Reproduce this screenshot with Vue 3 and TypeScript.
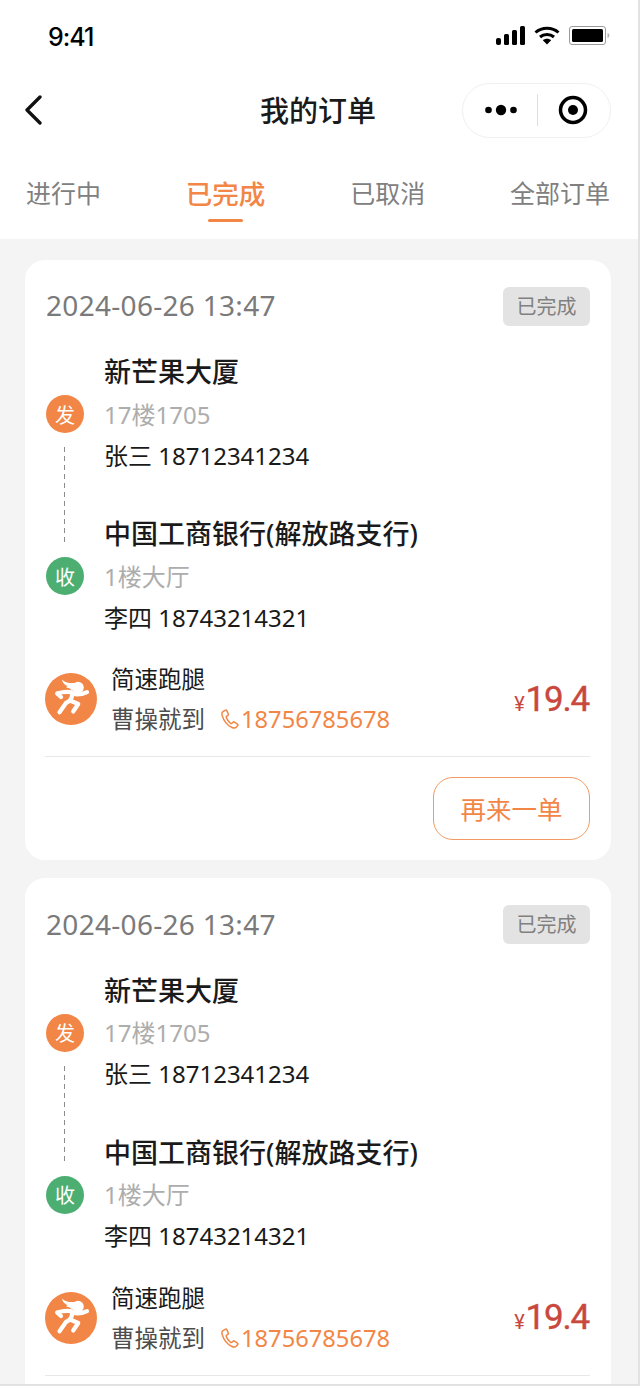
<script setup lang="ts">
const tabs = ['进行中', '已完成', '已取消', '全部订单']
const orders = [1, 2].map((id) => ({
  id,
  time: '2024-06-26 13:47',
  status: '已完成',
  stops: [
    { tag: '发', kind: 'send', name: '新芒果大厦', room: '17楼1705', contact: '张三 18712341234' },
    { tag: '收', kind: 'recv', name: '中国工商银行(解放路支行)', room: '1楼大厅', contact: '李四 18743214321' },
  ],
  service: '简速跑腿',
  rider: '曹操就到',
  phone: '18756785678',
  price: '19.4',
}))
</script>

<template>
  <div class="page">
    <div class="screen">
      <header class="top">
        <div class="status">
          <span class="clock">9:41</span>
          <div class="status-icons">
            <svg width="29" height="19" viewBox="0 0 29 19" fill="#000" aria-hidden="true">
              <rect x="0" y="12" width="5" height="7" rx="2" />
              <rect x="8" y="8" width="5" height="11" rx="1.500" />
              <rect x="16" y="4" width="5" height="15" rx="1.500" />
              <rect x="24" y="0" width="5" height="19" rx="1.500" />
            </svg>
            <svg width="26" height="19" viewBox="0 0 26 19" aria-hidden="true">
              <path d="M1.500 6.500C7.800.8 18.200.8 24.500 6.500" fill="none" stroke="#000" stroke-width="3" />
              <path d="M6 11c3.900-3.400 10.100-3.400 14 0" fill="none" stroke="#000" stroke-width="3" />
              <path d="M8.800 14.200c2.400-2 6-2 8.400 0L13 18.500z" fill="#000" />
            </svg>
            <svg width="41" height="19" viewBox="0 0 41 19" aria-hidden="true">
              <rect x="0.500" y="0.500" width="36" height="18" rx="2.500" fill="none" stroke="#9b9b9b" />
              <rect x="3" y="3" width="31" height="13" rx="1.500" fill="#000" />
              <path d="M38.500 7c1.200.3 1.800 1.200 1.800 2.500s-.6 2.200-1.800 2.500z" fill="#b5b5b5" />
            </svg>
          </div>
        </div>
        <div class="nav">
          <svg class="back" width="20" height="30" viewBox="0 0 20 30" aria-hidden="true">
            <path d="M16 2 3 15l13 13" fill="none" stroke="#111" stroke-width="3.300" stroke-linecap="round" stroke-linejoin="round" />
          </svg>
          <h1 class="title">我的订单</h1>
          <div class="capsule">
            <svg width="32" height="14" viewBox="0 0 32 14" fill="#000" aria-hidden="true">
              <circle cx="3.500" cy="7" r="3.300" />
              <circle cx="16" cy="7" r="5.200" />
              <circle cx="28.500" cy="7" r="3.300" />
            </svg>
            <span class="capsule-line"></span>
            <svg width="30" height="30" viewBox="0 0 30 30" aria-hidden="true">
              <circle cx="15" cy="15" r="12.500" fill="none" stroke="#000" stroke-width="3.500" />
              <circle cx="15" cy="15" r="5" fill="#000" />
            </svg>
          </div>
        </div>
        <nav class="tabs">
          <button v-for="(t, i) in tabs" :key="t" class="tab" :class="{ 'tab--on': i === 1 }">{{ t }}</button>
        </nav>
      </header>

      <main class="list">
        <article v-for="o in orders" :key="o.id" class="card">
          <div class="card-head">
            <span class="time">{{ o.time }}</span>
            <span class="badge">{{ o.status }}</span>
          </div>

          <div class="route">
            <div v-for="s in o.stops" :key="s.tag" class="stop" :class="'stop--' + s.kind">
              <span class="dot">{{ s.tag }}</span>
              <div class="stop-text">
                <div class="stop-name">{{ s.name }}</div>
                <div class="stop-room">{{ s.room }}</div>
                <div class="stop-contact">{{ s.contact }}</div>
              </div>
            </div>
          </div>

          <div class="rider">
            <span class="logo">
              <svg width="52" height="52" viewBox="0 0 52 52" aria-hidden="true">
                <circle cx="26" cy="26" r="26" fill="#f28646" />
                <circle cx="33" cy="14.500" r="5.800" fill="#fff" />
                <path d="M17 6.500c3 3 7 4 13 3.500l-1 7c-2 .3-4-.5-5-2-1 .3-2 0-3-1 .8 0 1.300-.3 1.500-.8C19.500 12 17.500 9.500 17 6.500z" fill="#fff" />
                <path d="M12.200 20.500c5-1.500 10-2 14.800-1.200 1.500 2.800 8 3 15-.2M12.200 20.500l3.800 3.500" fill="none" stroke="#fff" stroke-width="4.200" stroke-linecap="round" stroke-linejoin="round" />
                <path d="M27 20.500c.5 4-2 7.500-6 9.500l-6.500 9.200M25 27.500l8.200 3.500-5 7.500" fill="none" stroke="#fff" stroke-width="4.200" stroke-linecap="round" stroke-linejoin="round" />
              </svg>
            </span>
            <div class="rider-text">
              <div class="service">{{ o.service }}</div>
              <div class="rider-line">
                <span class="rider-name">{{ o.rider }}</span>
                <span class="phone">
                  <svg width="18" height="20" viewBox="0 0 18 20" aria-hidden="true">
                    <path d="M4.500 1.200 2 2.600C.8 3.400.7 5 1.200 6.600c1.400 4.700 5 9.700 9.800 11.900 1.800.8 3.400.6 4.500-.5l1.200-1.400c.4-.5.300-1.100-.2-1.400l-3.100-2.100c-.5-.3-1-.3-1.400.1l-1 1c-.4.400-.9.400-1.400.1-2-1.400-3.500-3.500-4.300-5.800-.2-.5 0-1 .4-1.300l1.200-.8c.5-.3.600-.9.400-1.400L5.800 1.600c-.3-.5-.8-.7-1.300-.4z" fill="none" stroke="#f28646" stroke-width="1.500" stroke-linejoin="round" />
                  </svg>
                  {{ o.phone }}
                </span>
              </div>
            </div>
            <div class="price"><small>¥</small>{{ o.price }}</div>
          </div>

          <div class="card-foot">
            <button class="again">再来一单</button>
          </div>
        </article>
      </main>
    </div>
  </div>
</template>

<style>
html,
body {
  margin: 0;
  background: #fff;
}
</style>

<style scoped>
.page {
  width: 640px;
  height: 1388px;
  overflow: hidden;
  background: #fff;
  font-family: "Noto Sans", "Noto Sans CJK SC", sans-serif;
  color: #1a1a1a;
}

.screen {
  width: 638px;
  height: 1384px;
  overflow: hidden;
  background: #f4f4f4;
  border-right: 2px solid #e2e2e2;
  border-bottom: 2px solid #e2e2e2;
}

.top {
  height: 239px;
  background: #fff;
}

.status {
  height: 70px;
  padding: 0 28px 0 48px;
  display: flex;
  align-items: center;
  justify-content: space-between;
}
.clock {
  margin-top: 3px;
  font-family: Inter, sans-serif;
  font-size: 25px;
  font-weight: 500;
  letter-spacing: -1px;
  color: #000;
}
.status-icons {
  display: flex;
  align-items: center;
  gap: 9px;
}

.nav {
  height: 80px;
  display: grid;
  grid-template-columns: 1fr auto 1fr;
  align-items: center;
}
.back {
  margin-left: 24px;
}
.title {
  margin: 0 2px 3px 0;
  font-size: 29px;
  font-weight: 500;
  color: #1a1a1a;
}
.capsule {
  justify-self: end;
  width: 149px;
  height: 55px;
  margin-right: 27px;
  box-sizing: border-box;
  border: 1px solid #f0f0f0;
  border-radius: 28px;
  display: flex;
  align-items: center;
  padding: 0 22px;
  justify-content: space-between;
}
.capsule-line {
  width: 1px;
  height: 32px;
  background: #dedede;
}

.tabs {
  height: 89px;
  box-sizing: border-box;
  padding: 0 28px 5px 26px;
  display: flex;
  justify-content: space-between;
  align-items: center;
}
.tab {
  position: relative;
  padding: 0;
  border: 0;
  background: none;
  font: inherit;
  font-size: 25px;
  color: #808080;
}
.tab--on {
  font-size: 26.500px;
  font-weight: 500;
  color: #f28646;
}
.tab--on::after {
  content: "";
  position: absolute;
  left: 50%;
  bottom: -10px;
  width: 35px;
  height: 3px;
  margin-left: -18px;
  border-radius: 2px;
  background: #f28646;
}

.list {
  padding: 21px 27px 0 25px;
  display: flex;
  flex-direction: column;
  gap: 18px;
}

.card {
  flex: none;
  box-sizing: border-box;
  height: 600px;
  padding: 26px 21px 0 20px;
  background: #fff;
  border-radius: 20px;
}
.card + .card {
  padding-top: 26.500px;
}

.card-head {
  display: flex;
  align-items: center;
  justify-content: space-between;
  height: 40px;
}
.time {
  margin: 0 0 2px 1px;
  font-size: 28px;
  letter-spacing: 0.3px;
  color: #7a7a7a;
}
.badge {
  width: 87px;
  height: 39px;
  line-height: 39px;
  text-align: center;
  border-radius: 6px;
  background: #e3e3e3;
  font-size: 20px;
  color: #808080;
}

.route {
  margin-top: 25px;
  display: flex;
  flex-direction: column;
  gap: 36px;
}
.stop {
  position: relative;
  display: flex;
  align-items: center;
  gap: 21px;
  height: 126px;
}
.stop--send::after {
  content: "";
  position: absolute;
  left: 19px;
  top: 96px;
  width: 1px;
  height: 98px;
  background: repeating-linear-gradient(#8c8c8c 0 5px, transparent 5px 9px);
}
.dot {
  flex: none;
  width: 38px;
  height: 38px;
  margin-left: 1px;
  margin-right: -1px;
  border-radius: 50%;
  display: flex;
  align-items: center;
  justify-content: center;
  font-size: 20px;
  color: #fff;
}
.stop--send .dot {
  background: #f28646;
}
.stop--recv .dot {
  background: #4dae72;
}
.stop-name {
  font-size: 27px;
  font-weight: 500;
  line-height: 40px;
  color: #1a1a1a;
}
.stop-room {
  margin-top: 2.500px;
  font-size: 24px;
  line-height: 40px;
  color: #adadad;
}
.stop-contact {
  margin-top: 1px;
  font-size: 24px;
  line-height: 40px;
  color: #1a1a1a;
}

.rider {
  margin-top: 11px;
  height: 98px;
  padding-bottom: 8px;
  display: flex;
  align-items: center;
  border-bottom: 1px solid #e8e8e8;
}
.logo {
  flex: none;
  width: 52px;
  height: 52px;
  margin-right: 14px;
  display: flex;
}
.rider-text {
  flex: 1;
  min-width: 0;
}
.service {
  font-size: 23.500px;
  line-height: 40px;
  color: #1a1a1a;
}
.rider-line {
  display: flex;
  align-items: center;
  line-height: 40px;
}
.rider-name {
  font-size: 23.500px;
  color: #4d4d4d;
}
.phone {
  margin-left: 16px;
  display: flex;
  align-items: center;
  gap: 2px;
  font-size: 23.700px;
  color: #f28646;
}
.price {
  margin-right: 1px;
  font-family: Roboto, sans-serif;
  font-size: 35px;
  font-weight: 400;
  letter-spacing: -1.200px;
  -webkit-text-stroke: 0.4px #c9483d;
  color: #c9483d;
}
.price small {
  font-size: 20px;
  font-weight: 400;
  margin-right: 2px;
  -webkit-text-stroke: 0;
}

.card-foot {
  display: flex;
  justify-content: flex-end;
  margin-top: 20px;
}
.again {
  width: 157px;
  height: 63px;
  box-sizing: border-box;
  padding: 0 0 3px;
  border: 1px solid #f39a63;
  border-radius: 20px;
  background: #fff;
  font: inherit;
  font-size: 25.500px;
  color: #f28646;
}
</style>
